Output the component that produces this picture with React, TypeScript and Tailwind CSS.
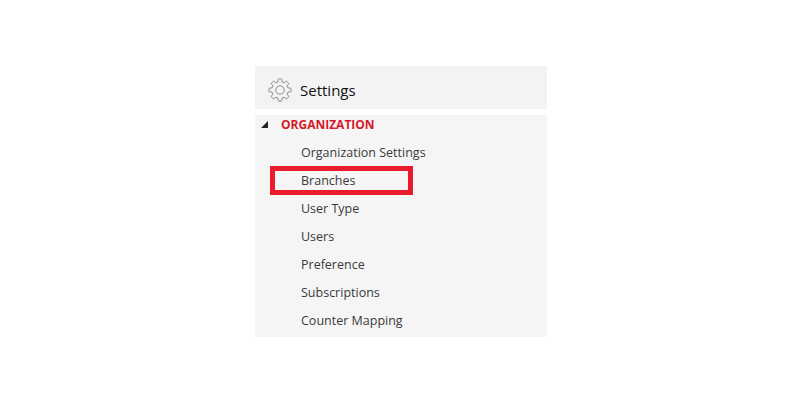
import React from 'react';

const items = ['Organization Settings', 'Branches', 'User Type', 'Users', 'Preference', 'Subscriptions', 'Counter Mapping'];

const GearIcon = () => (
  <svg width="24" height="24" viewBox="0 0 24 24" fill="none" stroke="#8c8c8c" strokeWidth="1" strokeLinejoin="round">
    <circle cx="12" cy="12" r="4.2" />
    <path d="M10.2 1.2c0-.4 3.6-.4 3.6 0l.3 2.8 2 .8 2.2-1.7c.3-.3 2.8 2.2 2.5 2.5L19.1 7.8l.9 2.1 2.8.3c.4 0 .4 3.6 0 3.6l-2.8.3-.9 2.1 1.7 2.2c.3.3-2.2 2.8-2.5 2.5l-2.2-1.7-2 .8-.3 2.8c0 .4-3.6.4-3.6 0l-.3-2.8-2-.8-2.2 1.7c-.3.3-2.8-2.2-2.5-2.5l1.7-2.2-.9-2.1-2.8-.3c-.4 0-.4-3.6 0-3.6l2.8-.3.9-2.1-1.7-2.2c-.3-.3 2.2-2.8 2.5-2.5l2.2 1.7 2-.8z" />
  </svg>
);

export default function App() {
  return (
    <div className="w-[800px] h-[400px] bg-white pt-[66px] pl-[255px] font-['Open_Sans',sans-serif] overflow-hidden">
      <div className="w-[292px]">
        <div className="h-[43px] bg-[#f3f3f3] flex items-center pt-[5px] pl-[13px] gap-[8px]">
          <GearIcon />
          <span className="text-[15px] text-[#111]">Settings</span>
        </div>
        <div className="relative mt-[6px] h-[222px] bg-[#f5f5f5]">
          <div className="h-[19px] flex items-center pl-[5px]">
            <svg width="9" height="9" viewBox="0 0 9 9"><path d="M8 1v7H1z" fill="#222" /></svg>
            <span className="ml-[12px] text-[12px] font-bold text-[#d4182c]">ORGANIZATION</span>
          </div>
          <ul className="mt-[5px]">
            {items.map((item) => (
              <li key={item} className="h-[28px] flex items-center pl-[46px] text-[12.5px] text-[#3a3a3a]">{item}</li>
            ))}
          </ul>
          {/* highlight box */}
          <div className="absolute left-[15px] top-[51px] w-[143px] h-[29px] border-[5px] border-[#e81c2c]" />
        </div>
      </div>
    </div>
  );
}
